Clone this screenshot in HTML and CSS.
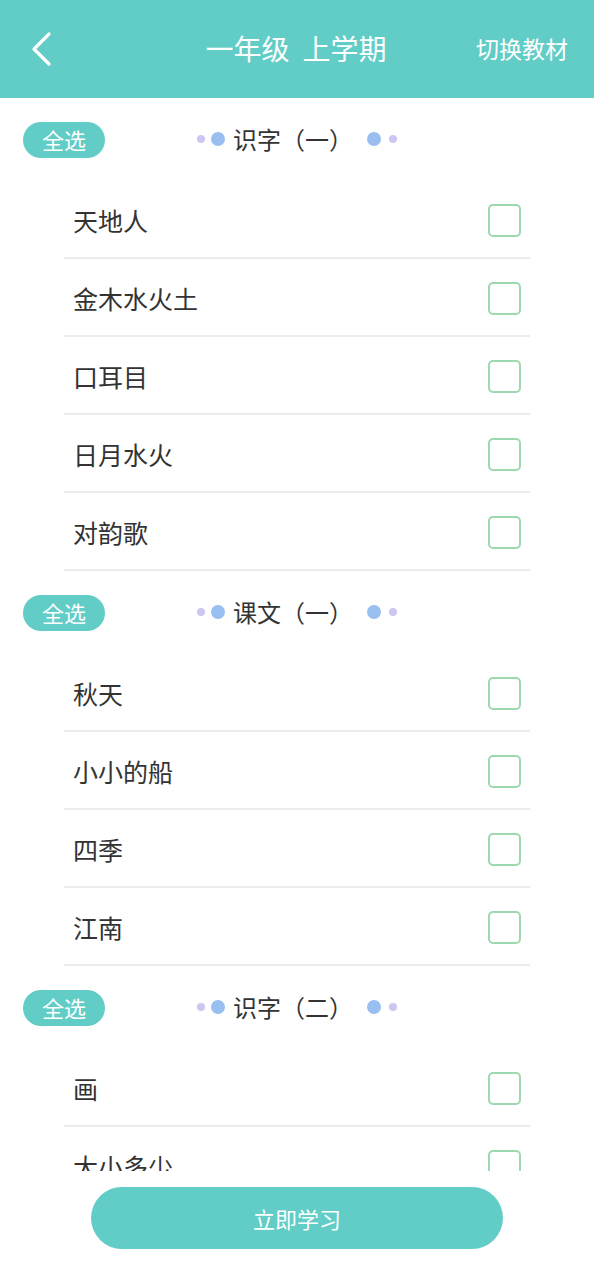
FILE: index.html
```html
<!DOCTYPE html>
<html lang="zh">
<head>
<meta charset="utf-8">
<link rel="stylesheet" href="styles.css">
</head>
<body>
<div class="app">
  <header class="topbar">
    <div class="back">
      <svg width="24" height="36" viewBox="0 0 24 36"><polyline points="19,3 4,18 19,33" fill="none" stroke="#fff" stroke-width="3.2" stroke-linecap="round" stroke-linejoin="round"/></svg>
    </div>
    <div class="title"><span>一年级</span><span>上学期</span></div>
    <div class="switch">切换教材</div>
  </header>

  <main class="scroll">
    <section class="section">
      <div class="sec-head">
        <div class="pill-wrap"><span class="pill">全选</span></div>
        <div class="sec-title"><i class="dot s"></i><i class="dot l"></i><span class="t">识字（一）</span><i class="dot l r"></i><i class="dot s"></i></div>
        <div></div>
      </div>
      <div class="row"><span>天地人</span><i class="box"></i></div>
      <div class="row"><span>金木水火土</span><i class="box"></i></div>
      <div class="row"><span>口耳目</span><i class="box"></i></div>
      <div class="row"><span>日月水火</span><i class="box"></i></div>
      <div class="row"><span>对韵歌</span><i class="box"></i></div>
    </section>
    <section class="section">
      <div class="sec-head">
        <div class="pill-wrap"><span class="pill">全选</span></div>
        <div class="sec-title"><i class="dot s"></i><i class="dot l"></i><span class="t">课文（一）</span><i class="dot l r"></i><i class="dot s"></i></div>
        <div></div>
      </div>
      <div class="row"><span>秋天</span><i class="box"></i></div>
      <div class="row"><span>小小的船</span><i class="box"></i></div>
      <div class="row"><span>四季</span><i class="box"></i></div>
      <div class="row"><span>江南</span><i class="box"></i></div>
    </section>
    <section class="section">
      <div class="sec-head">
        <div class="pill-wrap"><span class="pill">全选</span></div>
        <div class="sec-title"><i class="dot s"></i><i class="dot l"></i><span class="t">识字（二）</span><i class="dot l r"></i><i class="dot s"></i></div>
        <div></div>
      </div>
      <div class="row"><span>画</span><i class="box"></i></div>
      <div class="row"><span>大小多少</span><i class="box"></i></div>
      <div class="row"><span>小书包</span><i class="box"></i></div>
    </section>
  </main>

  <footer class="footer">
    <button class="study">立即学习</button>
  </footer>
</div>
</body>
</html>
```

FILE: styles.css
```css
* { box-sizing: border-box; }
html, body { margin: 0; padding: 0; }
body {
  font-family: "Noto Sans CJK SC", "Noto Sans", sans-serif;
  background: #fff;
  color: #333;
}
.app {
  width: 594px;
  height: 1280px;
  display: flex;
  flex-direction: column;
  overflow: hidden;
}
.topbar {
  height: 98px;
  flex: none;
  background: #61cdc6;
  color: #fff;
  display: grid;
  grid-template-columns: 1fr auto 1fr;
  align-items: center;
  padding: 0 26px 0 30px;
}
.back { display: flex; align-items: center; height: 36px; }
.title {
  font-size: 28px;
  display: flex;
  gap: 13px;
  line-height: 1.2;
  justify-self: center;
  margin-left: -6px;
}
.switch {
  justify-self: end;
  font-size: 23px;
  line-height: 1.2;
}
.scroll {
  flex: 0 0 1073px;
  overflow: hidden;
}
.sec-head {
  height: 83px;
  display: grid;
  grid-template-columns: 1fr auto 1fr;
  align-items: center;
}
.pill-wrap { padding-left: 23px; display: flex; }
.pill {
  width: 82px;
  height: 36px;
  border-radius: 18px;
  background: #61cdc6;
  color: #fff;
  font-size: 22px;
  display: flex;
  align-items: center;
  justify-content: center;
  line-height: 1.2;
}
.sec-title {
  display: flex;
  align-items: center;
}
.sec-title .t {
  font-size: 24px;
  line-height: 1.2;
  margin: 0 14px 0 8px;
  color: #333;
}
.dot { display: block; border-radius: 50%; }
.dot.s { width: 8px; height: 8px; background: #cdc6f2; }
.dot.l { width: 14px; height: 14px; background: #98bff0; margin-left: 6px; }
.dot.l.r { margin-left: 0; margin-right: 8px; }
.row {
  margin: 0 64px;
  height: 78px;
  border-bottom: 2px solid #ececec;
  display: flex;
  align-items: center;
  justify-content: space-between;
  padding: 2px 9px 0 9px;
  font-size: 25px;
  color: #333;
}
.box {
  width: 33px;
  height: 33px;
  border: 2.5px solid #9dd9af;
  border-radius: 5px;
  display: block;
}
.footer {
  flex: 1;
  display: flex;
  justify-content: center;
  padding-top: 16px;
}
.study {
  width: 412px;
  height: 62px;
  border-radius: 31px;
  border: none;
  background: #61cdc6;
  color: #fff;
  font-family: inherit;
  font-size: 22px;
  line-height: 1.3;
  padding: 0;
}
```
